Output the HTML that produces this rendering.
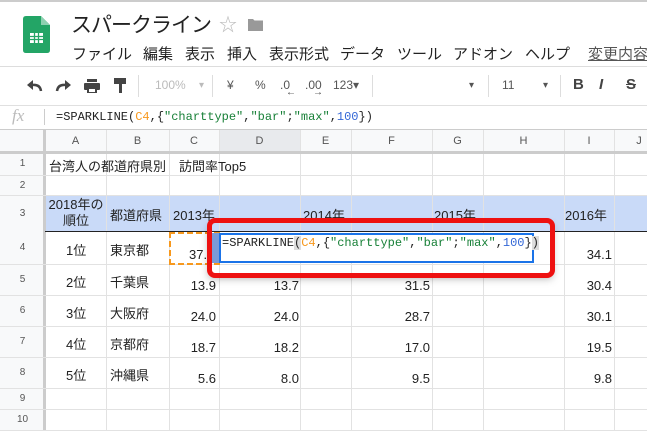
<!DOCTYPE html><html><head><meta charset="utf-8"><style>
*{margin:0;padding:0;box-sizing:border-box}
body{width:647px;height:431px;overflow:hidden;background:#fff;position:relative;font-family:"Liberation Sans","Noto Sans CJK JP",sans-serif;color:#222}
.a{position:absolute;white-space:nowrap}
.mono{font-family:"Liberation Mono","Noto Sans CJK JP",monospace}
.vl{position:absolute;width:1px;background:#e2e2e2}
.hl{position:absolute;height:1px;background:#e2e2e2}
.c{position:absolute;font-size:13px;white-space:nowrap}
.rh{position:absolute;left:0;width:45px;text-align:center;font-size:10px;color:#555}
.ch{position:absolute;top:130px;height:23px;line-height:23px;text-align:center;font-size:11px;color:#555}
.m{position:absolute;top:43px;font-size:15px;color:#222;white-space:nowrap}
.t{position:absolute;top:78px;font-size:12px;color:#555;white-space:nowrap}
.sep{position:absolute;top:75px;width:1px;height:22px;background:#ddd}
</style></head><body>
<div class="a" style="left:0;top:0;width:647px;height:2px;background:#ccc"></div>
<svg class="a" style="left:23px;top:16px" width="27" height="37" viewBox="0 0 27 37"><path d="M3 0H18L27 9V34Q27 37 24 37H3Q0 37 0 34V3Q0 0 3 0Z" fill="#23a566"/><path d="M18 0V9H27Z" fill="#8ed1b1"/><rect x="7" y="17" width="13" height="10" fill="#fff"/><path d="M7 20.5H20M7 23.5H20M11.5 17V27M15.5 17V27" stroke="#23a566" stroke-width="1.3"/></svg>
<div class="a" style="left:71px;top:9px;font-size:21px;color:#222;letter-spacing:-1px">スパークライン</div>
<div class="a" style="left:219px;top:11px;font-size:18px;color:#bbb">☆</div>
<svg class="a" style="left:248px;top:18px" width="15" height="13"><path d="M0 1H5L6.5 2.5H15V13H0Z" fill="#999"/></svg>
<div class="m" style="left:72px">ファイル</div><div class="m" style="left:143px">編集</div><div class="m" style="left:185px">表示</div><div class="m" style="left:227px">挿入</div><div class="m" style="left:269px">表示形式</div><div class="m" style="left:340px">データ</div><div class="m" style="left:397px">ツール</div><div class="m" style="left:453px">アドオン</div><div class="m" style="left:525px">ヘルプ</div>
<div class="m" style="left:588px;color:#555;text-decoration:underline">変更内容を</div>
<div class="a" style="left:0;top:66px;width:647px;height:1px;background:#ddd"></div>
<!-- toolbar -->
<svg class="a" style="left:27px;top:80px" width="16" height="12"><path d="M14 11Q13 4 5 5" fill="none" stroke="#444" stroke-width="2.5"/><path d="M0 5L6 0V10Z" fill="#444"/></svg>
<svg class="a" style="left:55px;top:80px" width="16" height="12"><path d="M2 11Q3 4 11 5" fill="none" stroke="#444" stroke-width="2.5"/><path d="M16 5L10 0V10Z" fill="#444"/></svg>
<svg class="a" style="left:84px;top:79px" width="16" height="14"><rect x="3" y="0" width="10" height="3" fill="#444"/><rect x="0" y="4" width="16" height="7" rx="1" fill="#444"/><rect x="3" y="9" width="10" height="5" fill="#444"/><rect x="5" y="10" width="6" height="3" fill="#fff"/></svg>
<svg class="a" style="left:114px;top:78px" width="12" height="16"><rect x="0" y="0" width="12" height="6" fill="#444"/><rect x="5" y="6" width="3" height="9" fill="#444"/></svg>
<div class="sep" style="left:138px"></div>
<div class="t" style="left:155px;color:#bbb">100%</div><div class="t" style="left:199px;color:#bbb;font-size:10px;top:80px">▾</div>
<div class="sep" style="left:212px"></div>
<div class="t" style="left:227px">¥</div><div class="t" style="left:255px">%</div><div class="t" style="left:280px">.0</div><div class="t" style="left:305px">.00</div><div class="t" style="left:333px">123▾</div>
<div class="a" style="left:286px;top:87px;font-size:10px;color:#444">←</div>
<div class="a" style="left:313px;top:87px;font-size:10px;color:#444">→</div>
<div class="sep" style="left:372px"></div>
<div class="t" style="left:469px;font-size:10px;top:80px">▾</div>
<div class="sep" style="left:488px"></div>
<div class="t" style="left:502px">11</div>
<div class="t" style="left:543px;font-size:10px;top:80px">▾</div>
<div class="sep" style="left:560px"></div>
<div class="a" style="left:573px;top:76px;font-size:15px;color:#444;font-weight:bold">B</div>
<div class="a" style="left:599px;top:76px;font-size:15px;color:#444;font-weight:bold;font-style:italic">I</div>
<div class="a" style="left:626px;top:76px;font-size:15px;color:#444;font-weight:bold"><s>S</s></div>
<div class="a" style="left:0;top:105px;width:647px;height:1px;background:#e0e0e0"></div>
<!-- formula bar -->
<div class="a" style="left:12px;top:106px;font-size:17px;color:#bbb;font-style:italic;font-family:'Liberation Serif',serif">fx</div>
<div class="a" style="left:44px;top:109px;width:1px;height:16px;background:#ccc"></div>
<div class="a mono" style="left:56px;top:110px;font-size:12px;color:#222">=SPARKLINE(<span style="color:#f7981d">C4</span>,{<span style="color:#188038">"charttype"</span>,<span style="color:#188038">"bar"</span>;<span style="color:#188038">"max"</span>,<span style="color:#3367d6">100</span>})</div>
<div class="a" style="left:0;top:129px;width:647px;height:1px;background:#ccc"></div>
<!-- grid -->
<div class="a" style="left:0;top:130px;width:647px;height:23px;background:#f8f9fa"></div>
<div class="a" style="left:219px;top:130px;width:81px;height:23px;background:#e8eaed"></div>
<div class="a" style="left:0;top:153px;width:45px;height:278px;background:#f8f9fa"></div>
<div class="a" style="left:0;top:195px;width:647px;height:37px;background:#c9daf8"></div>
<div class="a" style="left:0;top:195px;width:45px;height:37px;background:#f8f9fa"></div>
<div class="ch" style="left:45px;width:61px">A</div><div class="ch" style="left:106px;width:63px">B</div><div class="ch" style="left:169px;width:50px">C</div><div class="ch" style="left:219px;width:81px">D</div><div class="ch" style="left:300px;width:51px">E</div><div class="ch" style="left:351px;width:81px">F</div><div class="ch" style="left:432px;width:51px">G</div><div class="ch" style="left:483px;width:81px">H</div><div class="ch" style="left:564px;width:50px">I</div><div class="ch" style="left:614px;width:50px">J</div>
<div class="vl" style="top:130px;height:301px;background:#ccc;width:3px;left:43px"></div>
<div class="vl" style="left:106px;top:130px;height:301px"></div><div class="vl" style="left:169px;top:130px;height:301px"></div><div class="vl" style="left:219px;top:130px;height:301px"></div><div class="vl" style="left:300px;top:130px;height:301px"></div><div class="vl" style="left:351px;top:130px;height:301px"></div><div class="vl" style="left:432px;top:130px;height:301px"></div><div class="vl" style="left:483px;top:130px;height:301px"></div><div class="vl" style="left:564px;top:130px;height:301px"></div><div class="vl" style="left:614px;top:130px;height:301px"></div>
<div class="hl" style="left:0;top:151px;width:647px;height:3px;background:#ccc"></div>
<div class="hl" style="left:0;top:175px;width:647px"></div><div class="hl" style="left:0;top:195px;width:647px"></div>
<div class="hl" style="left:45px;top:231px;width:602px;background:#222"></div>
<div class="hl" style="left:0;top:264px;width:647px"></div><div class="hl" style="left:0;top:295px;width:647px"></div><div class="hl" style="left:0;top:326px;width:647px"></div><div class="hl" style="left:0;top:357px;width:647px"></div><div class="hl" style="left:0;top:388px;width:647px"></div><div class="hl" style="left:0;top:409px;width:647px"></div><div class="hl" style="left:0;top:430px;width:647px"></div>
<div class="rh" style="top:158px">1</div><div class="rh" style="top:180px">2</div><div class="rh" style="top:208px">3</div><div class="rh" style="top:242px">4</div><div class="rh" style="top:274px">5</div><div class="rh" style="top:305px">6</div><div class="rh" style="top:336px">7</div><div class="rh" style="top:367px">8</div><div class="rh" style="top:393px">9</div><div class="rh" style="top:414px">10</div>
<div class="c" style="left:49px;top:156px">台湾人の都道府県別　訪問率Top5</div>
<div class="c" style="left:47px;top:197px;width:58px;text-align:center;line-height:16px">2018年の<br>順位</div>
<div class="c" style="left:110px;top:205px">都道府県</div>
<div class="c" style="left:173px;top:205px">2013年</div>
<div class="c" style="left:303px;top:205px">2014年</div>
<div class="c" style="left:434px;top:205px">2015年</div>
<div class="c" style="left:565px;top:205px">2016年</div>
<div class="c" style="left:66px;top:240px">1位</div><div class="c" style="left:110px;top:240px">東京都</div>
<div class="c" style="left:66px;top:272px">2位</div><div class="c" style="left:110px;top:272px">千葉県</div>
<div class="c" style="left:66px;top:303px">3位</div><div class="c" style="left:110px;top:303px">大阪府</div>
<div class="c" style="left:66px;top:334px">4位</div><div class="c" style="left:110px;top:334px">京都府</div>
<div class="c" style="left:66px;top:365px">5位</div><div class="c" style="left:110px;top:365px">沖縄県</div>
<div class="c" style="left:189px;top:247px">37.</div>
<div class="c" style="right:431px;top:278px">13.9</div><div class="c" style="right:348px;top:278px">13.7</div><div class="c" style="right:217px;top:278px">31.5</div><div class="c" style="right:35px;top:278px">30.4</div>
<div class="c" style="right:431px;top:309px">24.0</div><div class="c" style="right:348px;top:309px">24.0</div><div class="c" style="right:217px;top:309px">28.7</div><div class="c" style="right:35px;top:309px">30.1</div>
<div class="c" style="right:431px;top:340px">18.7</div><div class="c" style="right:348px;top:340px">18.2</div><div class="c" style="right:217px;top:340px">17.0</div><div class="c" style="right:35px;top:340px">19.5</div>
<div class="c" style="right:431px;top:371px">5.6</div><div class="c" style="right:348px;top:371px">8.0</div><div class="c" style="right:217px;top:371px">9.5</div><div class="c" style="right:35px;top:371px">9.8</div>
<div class="c" style="right:35px;top:247px">34.1</div>
<div class="a" style="left:169px;top:232px;width:51px;height:33px;border:2px dashed #f7981d"></div>
<!-- editor -->
<div class="a" style="left:209px;top:223px;width:343px;height:52px;box-shadow:0 3px 8px rgba(0,0,0,.35)"></div>
<div class="a" style="left:212px;top:233px;width:7px;height:30px;background:#7a9bd8"></div>
<div class="a" style="left:219px;top:233px;width:315px;height:30px;background:#fff;border:2px solid #1a73e8"></div>
<div class="a mono" style="left:222px;top:236px;font-size:12px;color:#222">=SPARKLINE<span style="background:#ddd">(</span><span style="color:#f7981d">C4</span>,{<span style="color:#188038">"charttype"</span>,<span style="color:#188038">"bar"</span>;<span style="color:#188038">"max"</span>,<span style="color:#3367d6">100</span>}<span style="background:#ddd">)</span></div>
<div class="a" style="left:207px;top:218px;width:348px;height:60px;border:5px solid #ee1111;border-radius:8px"></div>
</body></html>
